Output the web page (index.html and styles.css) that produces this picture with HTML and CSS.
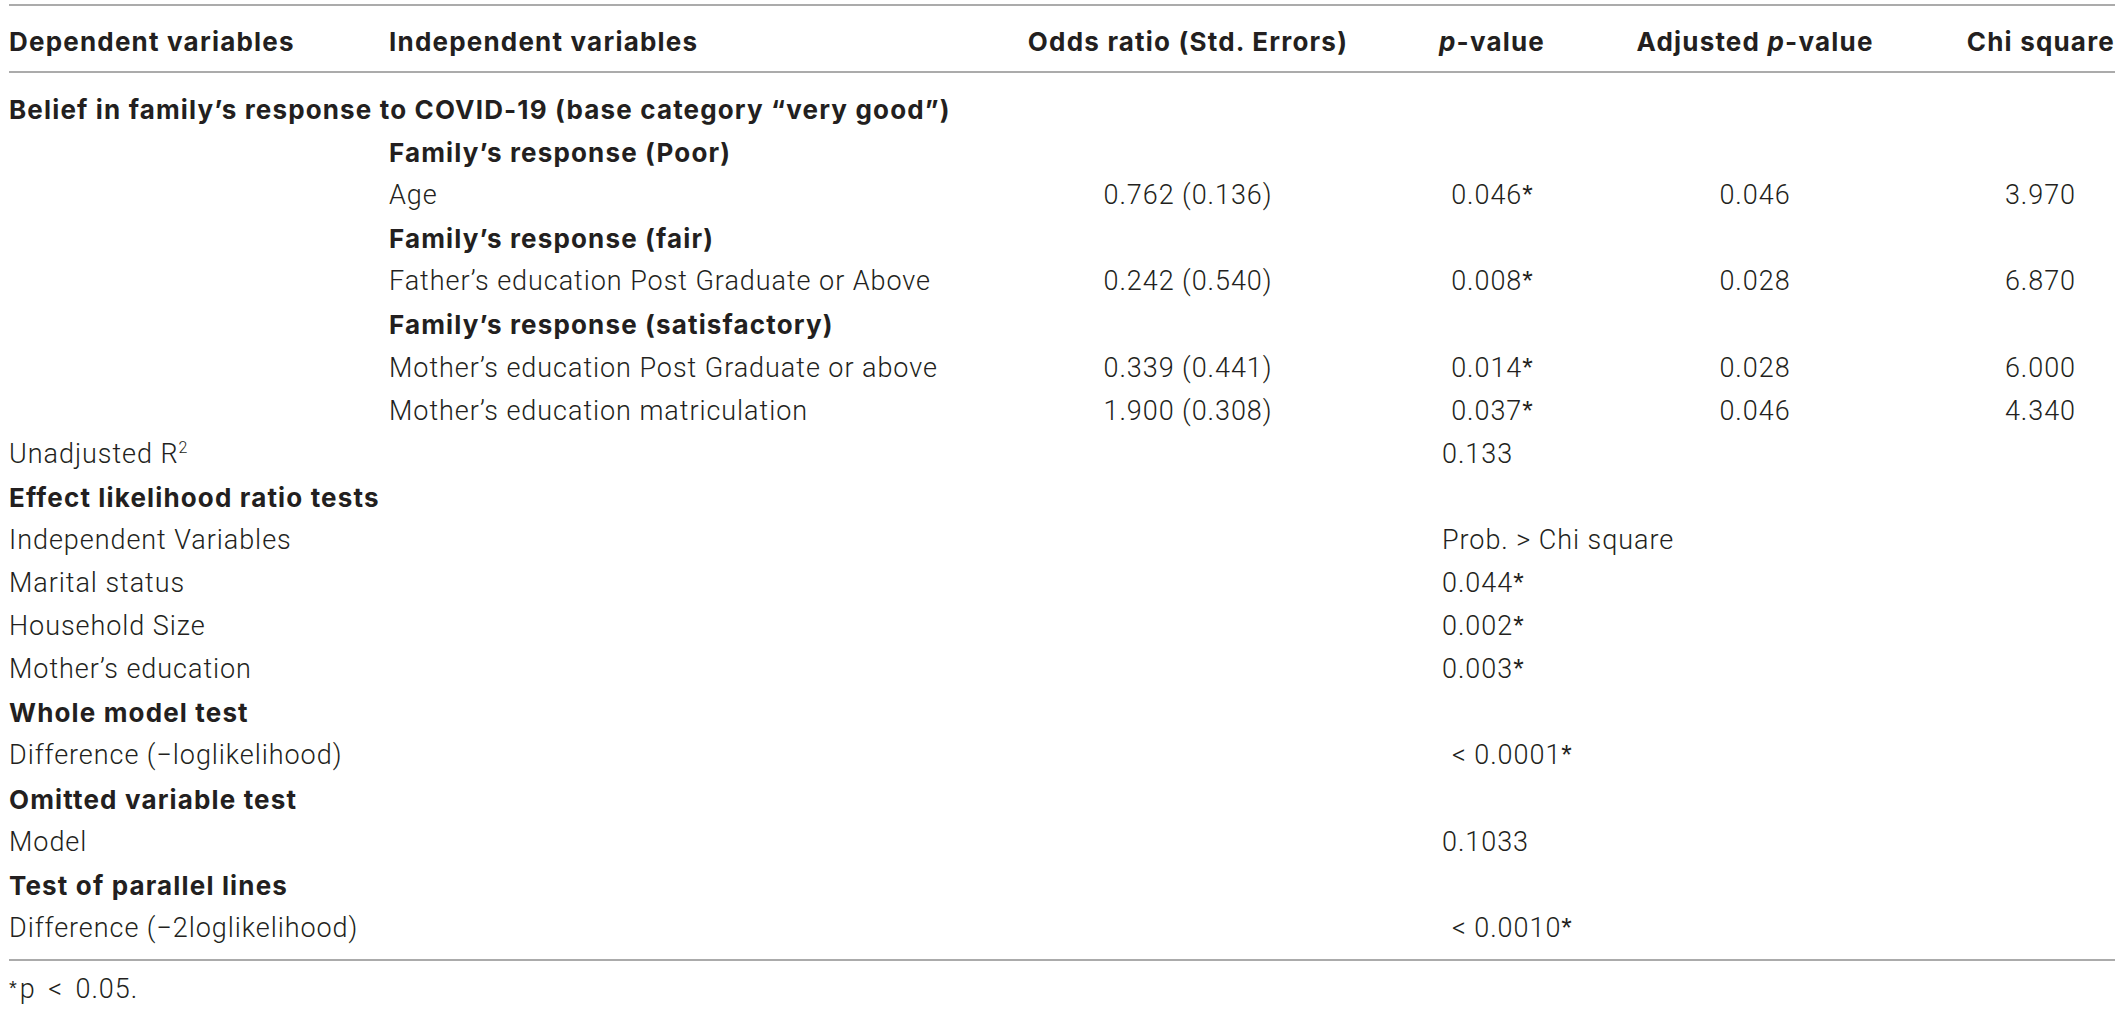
FILE: index.html
```html
<!DOCTYPE html>
<html lang="en">
<head>
<meta charset="utf-8">
<title>Table</title>
<link rel="stylesheet" href="styles.css">
</head>
<body>
<table class="tbl">
  <colgroup>
    <col class="c1"><col class="c2"><col class="c3"><col class="c4"><col class="c5"><col class="c6">
  </colgroup>
  <thead>
    <tr>
      <th class="left">Dependent variables</th>
      <th class="left">Independent variables</th>
      <th class="mid">Odds ratio (Std. Errors)</th>
      <th class="mid"><i>p</i>-value</th>
      <th class="mid">Adjusted <i>p</i>-value</th>
      <th class="right">Chi square</th>
    </tr>
  </thead>
  <tbody>
    <tr><td class="b" colspan="6">Belief in family’s response to COVID-19 (base category “very good”)</td></tr>
    <tr><td></td><td class="b" colspan="5">Family’s response (Poor)</td></tr>
    <tr><td></td><td>Age</td><td class="mid">0.762 (0.136)</td><td class="mid">0.046<span class="ast">*</span></td><td class="mid">0.046</td><td class="chi">3.970</td></tr>
    <tr><td></td><td class="b" colspan="5">Family’s response (fair)</td></tr>
    <tr><td></td><td>Father’s education Post Graduate or Above</td><td class="mid">0.242 (0.540)</td><td class="mid">0.008<span class="ast">*</span></td><td class="mid">0.028</td><td class="chi">6.870</td></tr>
    <tr><td></td><td class="b" colspan="5">Family’s response (satisfactory)</td></tr>
    <tr><td></td><td>Mother’s education Post Graduate or above</td><td class="mid">0.339 (0.441)</td><td class="mid">0.014<span class="ast">*</span></td><td class="mid">0.028</td><td class="chi">6.000</td></tr>
    <tr><td></td><td>Mother’s education matriculation</td><td class="mid">1.900 (0.308)</td><td class="mid">0.037<span class="ast">*</span></td><td class="mid">0.046</td><td class="chi">4.340</td></tr>
    <tr><td colspan="3">Unadjusted R<sup>2</sup></td><td class="val" colspan="3">0.133</td></tr>
    <tr><td class="b" colspan="6">Effect likelihood ratio tests</td></tr>
    <tr><td colspan="3">Independent Variables</td><td class="val" colspan="3">Prob. &gt; Chi square</td></tr>
    <tr><td colspan="3">Marital status</td><td class="val" colspan="3">0.044<span class="ast">*</span></td></tr>
    <tr><td colspan="3">Household Size</td><td class="val" colspan="3">0.002<span class="ast">*</span></td></tr>
    <tr><td colspan="3">Mother’s education</td><td class="val" colspan="3">0.003<span class="ast">*</span></td></tr>
    <tr><td class="b" colspan="6">Whole model test</td></tr>
    <tr><td colspan="3">Difference (−loglikelihood)</td><td class="val lt" colspan="3">&lt; 0.0001<span class="ast">*</span></td></tr>
    <tr><td class="b" colspan="6">Omitted variable test</td></tr>
    <tr><td colspan="3">Model</td><td class="val" colspan="3">0.1033</td></tr>
    <tr><td class="b" colspan="6">Test of parallel lines</td></tr>
    <tr><td colspan="3">Difference (−2loglikelihood)</td><td class="val lt" colspan="3">&lt; 0.0010<span class="ast">*</span></td></tr>
  </tbody>
</table>
<p class="note"><span class="ast sm">*</span>p &lt; 0.05.</p>
</body>
</html>
```

FILE: styles.css
```css
html, body {
  margin: 0;
  background: #ffffff;
}

body {
  padding: 4px 0 0 9px;
  font-family: Roboto, Inter, "Liberation Sans", Arial, sans-serif;
  font-size: 27px;
  font-weight: 300;
  letter-spacing: 0.95px;
  color: #231f20;
}

.tbl {
  width: 2106px;
  table-layout: fixed;
  border-collapse: separate;
  border-spacing: 0;
  border-top: 2px solid #ababab;
  border-bottom: 2px solid #ababab;
}

.c1 { width: 380px; }
.c2 { width: 611px; }
.c3 { width: 376px; }
.c4 { width: 232px; }
.c5 { width: 294px; }
.c6 { width: 213px; }

th {
  font-family: Inter, "Liberation Sans", Arial, sans-serif;
  font-size: 26px;
  font-weight: 700;
  letter-spacing: 1.2px;
  line-height: 43px;
  padding: 14px 0 8px;
  border-bottom: 2px solid #ababab;
  white-space: nowrap;
}

th i {
  font-weight: 700;
}

td {
  padding: 0;
  line-height: 43.1px;
  white-space: nowrap;
  text-align: left;
}

tbody tr:first-child td {
  padding-top: 15px;
}

tbody tr:last-child td {
  padding-bottom: 9px;
}

.left { text-align: left; }
.mid { text-align: center; }
.right { text-align: right; }

.b {
  font-family: Inter, "Liberation Sans", Arial, sans-serif;
  font-size: 26px;
  font-weight: 700;
  letter-spacing: 1.15px;
}

.chi {
  text-align: right;
  padding-right: 39px;
}

.val {
  padding-left: 66px;
}

.val.lt {
  padding-left: 76px;
}

.ast {
  font-family: "Liberation Sans", Arial, sans-serif;
  letter-spacing: 0;
}

.ast.sm {
  font-size: 20px;
  vertical-align: 3px;
  margin-right: 3px;
}

sup {
  font-size: 16px;
  line-height: 0;
  vertical-align: 10px;
}

.note {
  margin: 6px 0 0;
  line-height: 43px;
  word-spacing: 5px;
}
```
